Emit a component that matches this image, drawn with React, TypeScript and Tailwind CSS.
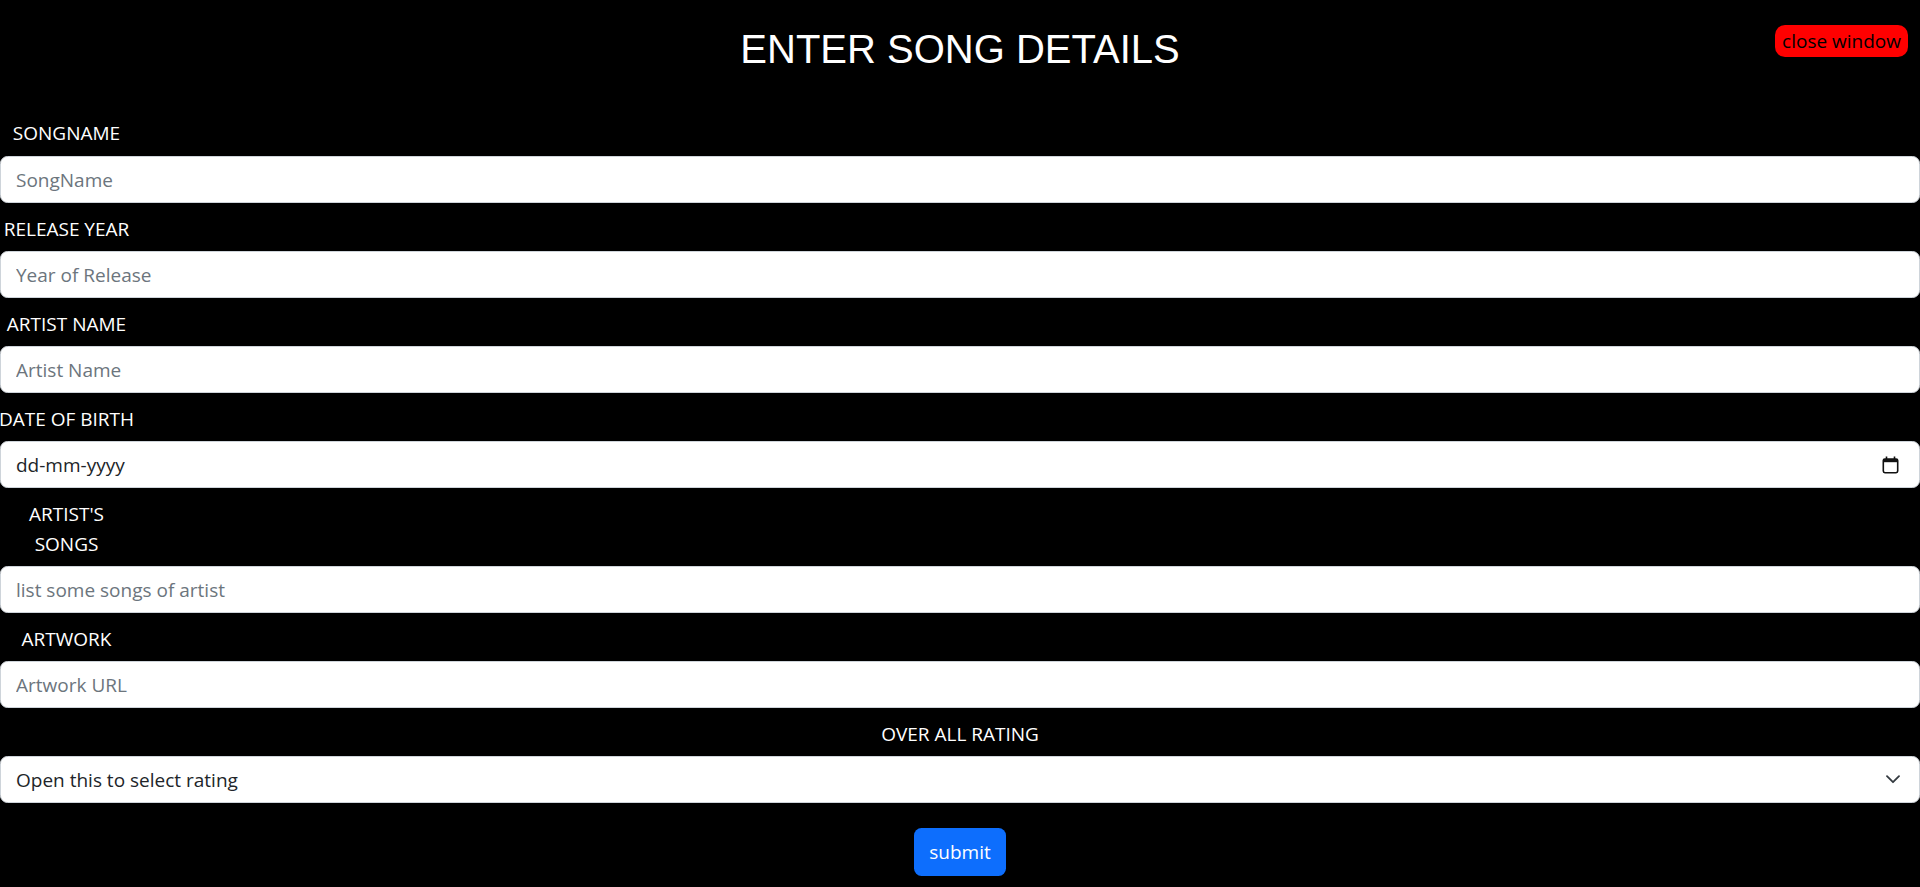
type Field = { label: string[]; placeholder: string };

const topFields: Field[] = [
  { label: ["SONGNAME"], placeholder: "SongName" },
  { label: ["RELEASE YEAR"], placeholder: "Year of Release" },
  { label: ["ARTIST NAME"], placeholder: "Artist Name" },
];

const bottomFields: Field[] = [
  { label: ["ARTIST'S", "SONGS"], placeholder: "list some songs of artist" },
  { label: ["ARTWORK"], placeholder: "Artwork URL" },
];

const boxClass =
  "block w-full h-[47px] rounded-[7.5px] border border-[#ced4da] bg-white px-[15px] text-[19px] leading-[30px] text-[#212529] outline-none";

function FieldLabel({ lines, first }: { lines: string[]; first?: boolean }) {
  const height = first ? "h-[84px] pt-[46px]" : lines.length > 1 ? "h-[78px] pt-[11px]" : "h-[48px] pt-[11px]";
  return (
    <div className={`${height} w-[133px] flex flex-col items-center text-white text-[19px] leading-[30px]`}>
      {lines.map((l) => (
        <span key={l} className="block h-[30px] whitespace-nowrap">
          {l}
        </span>
      ))}
    </div>
  );
}

function CalendarIcon() {
  return (
    <svg width="17" height="18" viewBox="0 0 17 18" fill="none">
      <path d="M4.5 0.5v3M12.5 0.5v3" stroke="#111" strokeWidth="1.6" />
      <rect x="1.3" y="3" width="14.4" height="13.7" rx="1.6" stroke="#111" strokeWidth="1.6" />
      <rect x="1.3" y="3" width="14.4" height="3.2" fill="#111" />
    </svg>
  );
}

function Chevron() {
  return (
    <svg width="14" height="9" viewBox="0 0 14 9" fill="none">
      <path d="M1 1.2l6 6 6-6" stroke="#343a40" strokeWidth="1.8" strokeLinecap="round" strokeLinejoin="round" />
    </svg>
  );
}

function TextField({ field, first }: { field: Field; first?: boolean }) {
  return (
    <div className="flex flex-col">
      <FieldLabel lines={field.label} first={first} />
      <input className={`${boxClass} placeholder:text-[#6c757d]`} placeholder={field.placeholder} />
    </div>
  );
}

export default function App() {
  return (
    <div className="min-h-screen bg-black font-['Open_Sans',sans-serif]">
      <div className="grid grid-cols-[1fr_auto_1fr] items-start pt-[25px]">
        <div />
        <h1 className="pt-px font-['Liberation_Sans',Arial,sans-serif] text-[40px] leading-[46px] text-white">
          ENTER SONG DETAILS
        </h1>
        <button className="justify-self-end mr-[12px] h-[32px] px-[7px] rounded-[10px] bg-[#ff0000] text-black text-[19px] leading-none flex items-center">
          close window
        </button>
      </div>

      <form className="flex flex-col" onSubmit={(e) => e.preventDefault()}>
        {topFields.map((f, i) => (
          <TextField key={f.placeholder} field={f} first={i === 0} />
        ))}

        <div className="flex flex-col">
          <FieldLabel lines={["DATE OF BIRTH"]} />
          <div className={`${boxClass} flex items-center justify-between pr-[20px]`}>
            <span>dd-mm-yyyy</span>
            <CalendarIcon />
          </div>
        </div>

        {bottomFields.map((f) => (
          <TextField key={f.placeholder} field={f} />
        ))}

        <div className="h-[48px] pt-[11px] text-center text-white text-[19px] leading-[30px]">OVER ALL RATING</div>
        <div className={`${boxClass} flex items-center justify-between pr-[19px]`}>
          <span>Open this to select rating</span>
          <Chevron />
        </div>

        <div className="flex justify-center pt-[25px] pb-[11px]">
          <button
            type="submit"
            className="w-[92px] h-[48px] rounded-[7.5px] bg-[#0d6efd] text-white text-[19px] leading-[30px] flex items-center justify-center"
          >
            submit
          </button>
        </div>
      </form>
    </div>
  );
}
